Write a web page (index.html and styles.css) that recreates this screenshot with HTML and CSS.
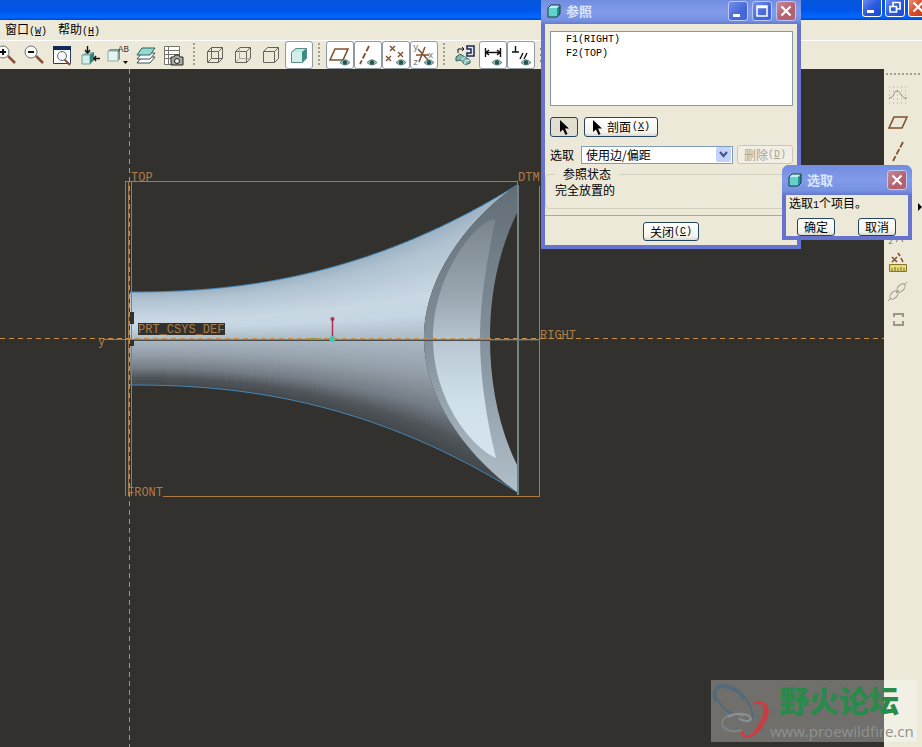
FILE: index.html
```
<!DOCTYPE html>
<html lang="zh-CN">
<head>
  <meta charset="UTF-8" />
  <meta name="viewport" content="width=device-width, initial-scale=1.0"/>
  <title>参照</title>
  <link rel="stylesheet" href="styles.css">
</head>
<body>
  <!-- shared icon parts -->
  <svg width="0" height="0" class="sprites" aria-hidden="true">
    <defs>
      <symbol id="eye" viewBox="0 0 10 7">
        <path d="M0 3.5Q5 -2 10 3.5Q5 8.5 0 3.5Z" fill="#a9c1ba" stroke="#4a726b" stroke-width=".8"/>
        <circle cx="5" cy="3.5" r="2.2" fill="#1f5552"/>
      </symbol>
      <symbol id="cube" viewBox="0 0 16 16">
        <path d="M2 5L5 2H14V11L11 14H2Z" fill="#2b8e8e"/>
        <path d="M2 5L5 2H14L11 5Z" fill="#c4f2ee"/>
        <path d="M2 5H11V14H2Z" fill="#62d3cb"/>
        <path d="M2 5L5 2H14V11L11 14H2Z" fill="none" stroke="#17383d"/>
      </symbol>
      <symbol id="wire" viewBox="0 0 18 18">
        <path d="M1.500 5.500H12.500V16.500H1.500ZM5.500 1.500H16.500V12.500M1.500 5.500L5.500 1.500M12.500 5.500L16.500 1.500M12.500 16.500L16.500 12.500" fill="none" stroke="#65645c"/>
      </symbol>
      <symbol id="plane" viewBox="0 0 20 14">
        <path d="M6 1H19L14 12H1Z" fill="none" stroke="#81502f" stroke-width="1.600"/>
      </symbol>
      <symbol id="arrow" viewBox="0 0 10 15">
        <path d="M1 0V12L4 9.500L6.500 15L8.500 14L6 8.500H10Z"/>
      </symbol>
      <symbol id="close" viewBox="0 0 12 12">
        <path d="M1.500 1.500L10.500 10.500M10.500 1.500L1.500 10.500" stroke="#fff" stroke-width="2.200"/>
      </symbol>
    </defs>
  </svg>

  <div class="app">
    <header class="titlebar">
      <button class="win-btn" aria-label="最小化"><svg width="12" height="12"><path d="M1 9H8V12H1Z" fill="#fff"/></svg></button>
      <button class="win-btn" aria-label="还原"><svg width="12" height="12"><path d="M4 5V1.500H11V8H8M1 5.500H7.500V11H1Z" fill="none" stroke="#fff" stroke-width="1.700"/></svg></button>
      <button class="win-btn red" aria-label="关闭"><svg width="12" height="12"><use href="#close"/></svg></button>
    </header>

    <nav class="menubar">
      <a href="#">窗口<span class="key">(<u>W</u>)</span></a>
      <a href="#">帮助<span class="key">(<u>H</u>)</span></a>
    </nav>

    <div class="toolbar">
      <button class="tool" aria-label="放大"><svg width="24" height="24"><path d="M14 13L21 20" stroke="#8a5236" stroke-width="2.500"/><circle cx="9" cy="9" r="6" fill="#f7f8f4" stroke="#6b7480"/><path d="M6 9H12M9 6V12" stroke="#111" stroke-width="2"/></svg></button>
      <button class="tool" aria-label="缩小"><svg width="24" height="24"><path d="M14 13L21 20" stroke="#8a5236" stroke-width="2.500"/><circle cx="9" cy="9" r="6" fill="#f7f8f4" stroke="#6b7480"/><path d="M6 9H12" stroke="#111" stroke-width="2"/></svg></button>
      <button class="tool" aria-label="重新调整"><svg width="24" height="24"><path d="M3.500 3.500H20.500V20.500H3.500Z" fill="#fff" stroke="#243c6d"/><path d="M3 3H21V7H3Z" fill="#10295d"/><path d="M14 16L20 22" stroke="#8a5236" stroke-width="2"/><circle cx="12" cy="13" r="4.500" fill="#f4f6f6" stroke="#5a646d"/></svg></button>
      <button class="tool" aria-label="重定向"><svg width="24" height="24"><path d="M4 12L8 9H16V17L13 20H4Z" fill="#87bdb3"/><path d="M4 12H12V21H4Z" fill="#d3efea" stroke="#759e97"/><path d="M12 12L16 9V17L12 21Z" fill="#33857b"/><path d="M9.500 3V10M7 7L9.500 10L12 7M22 15.500H16M18 13L16 15.500L18 18" fill="none" stroke="#111" stroke-width="1.400"/></svg></button>
      <button class="tool" aria-label="已保存视图"><svg width="24" height="24"><path d="M2 8L4 6H14V16L12 18H2Z" fill="#6c9993"/><path d="M2 8H12V18H2Z" fill="#e7f3ef" stroke="#8eafa9"/><path d="M17 18H22L19.500 21Z" fill="#111"/><text class="icon-text" x="12" y="9">AB</text></svg></button>
      <button class="tool" aria-label="层"><svg width="24" height="24"><path d="M3 20L8 14H21L16 20Z" fill="#fff" stroke="#41514f"/><path d="M3 16L8 10H21L16 16Z" fill="#fff" stroke="#41514f"/><path d="M3 12L8 5H21L16 12Z" fill="#8edcd3" stroke="#35605c"/></svg></button>
      <button class="tool" aria-label="视图管理器"><svg width="24" height="24"><path d="M2.500 3.500H17.500V21.500H2.500ZM6.500 3V21M2 7.500H17M2 11.500H17M2 15.500H17" fill="#fff" stroke="#74746d"/><path d="M9 14H12L13 12H17L18 14H21V22H9Z" fill="#a7a89f" stroke="#292925"/><circle cx="15" cy="18" r="2.500" fill="#eee" stroke="#222"/></svg></button>
      <span class="sep"></span>
      <button class="tool" aria-label="线框"><svg width="18" height="18"><use href="#wire"/><path d="M5.500 1.500V12.500H16.500M1.500 16.500L5.500 12.500" fill="none" stroke="#65645c"/></svg></button>
      <button class="tool" aria-label="隐藏线"><svg width="18" height="18"><use href="#wire"/><path d="M5.500 1.500V12.500H16.500M1.500 16.500L5.500 12.500" fill="none" stroke="#aaa89a"/></svg></button>
      <button class="tool" aria-label="无隐藏线"><svg width="18" height="18"><use href="#wire"/></svg></button>
      <button class="tool on" aria-label="着色"><svg width="18" height="18"><path d="M1 6L6 2H17V12L12 17H1Z" fill="#378b84"/><path d="M1 6L6 2H17L12 6Z" fill="#bbebe5"/><path d="M1 6H12V17H1Z" fill="#d4eeea"/><path d="M1.500 6.500L6 2.500H16.500V12L12 16.500H1.500Z" fill="none" stroke="#5b8c88"/></svg></button>
      <span class="sep"></span>
      <button class="tool on" aria-label="平面显示"><svg width="24" height="24"><use href="#plane" x="1" y="5" width="20" height="14"/><use href="#eye" x="12" y="16" width="10" height="7"/></svg></button>
      <button class="tool on" aria-label="轴显示"><svg width="24" height="24"><path d="M13 3L4 21" stroke="#81502f" stroke-width="1.800" stroke-dasharray="6 2"/><use href="#eye" x="11" y="16" width="10" height="7"/></svg></button>
      <button class="tool on" aria-label="点显示"><svg width="24" height="24"><path d="M6 3L11 8M11 3L6 8M14 9L19 14M19 9L14 14M2 13L7 18M7 13L2 18" stroke="#81502f" stroke-width="1.400"/><use href="#eye" x="12" y="16" width="10" height="7"/></svg></button>
      <button class="tool on" aria-label="坐标系显示"><svg width="24" height="24"><path d="M13 4L7 19M6 6L16 17M4 12H17" fill="none" stroke="#81502f" stroke-width="1.500"/><g class="icon-text faint"><text x="1" y="7">y</text><text x="16" y="15">x</text><text x="1" y="22">z</text></g><use href="#eye" x="12" y="16" width="10" height="7"/></svg></button>
      <span class="sep"></span>
      <button class="tool" aria-label="草绘方向"><svg width="24" height="24"><path d="M3 14L7 11L12 14L17 17V20L12 22L8 17L3 18Z" fill="#79b9af" stroke="#3b615d"/><path d="M8 17L12 14M12 22V18L17 17" fill="none" stroke="#e1f2ef"/><path d="M14 3H21V13H14V10H18V6H14Z" fill="none" stroke="#17245e" stroke-width="1.500"/><path d="M5 10V6H11M9 4L11 6L9 8" fill="none" stroke="#111"/></svg></button>
      <button class="tool on" aria-label="尺寸显示"><svg width="24" height="24"><path d="M4.500 5V14M19.500 5V14M5 9.500H19M8 7L5 9.500L8 12M16 7L19 9.500L16 12" fill="none" stroke="#111" stroke-width="1.400"/><use href="#eye" x="11" y="16" width="10" height="7"/></svg></button>
      <button class="tool on" aria-label="约束显示"><svg width="24" height="24"><path d="M3 9H10M6.500 3V9M14 10L11 16M18 10L15 16" stroke="#111" stroke-width="1.400"/><use href="#eye" x="12" y="16" width="10" height="7"/></svg></button>
      <button class="tool" aria-label="栅格显示"><svg width="24" height="24"><path d="M3 6H21M3 12H21M3 18H21" stroke="#222" stroke-dasharray="2 2"/></svg></button>
    </div>

    <main class="work">
      <svg class="viewport" role="img" aria-label="模型">
        <defs>
          <linearGradient id="horn" x1="0" y1="0" x2="0" y2="1">
            <stop offset="0" stop-color="#9cb2c3"/>
            <stop offset=".08" stop-color="#b0c2d0"/>
            <stop offset=".3" stop-color="#c9d8e3"/>
            <stop offset=".38" stop-color="#c6d6e2"/>
            <stop offset=".52" stop-color="#a9b7c2"/>
            <stop offset=".68" stop-color="#929da7"/>
            <stop offset=".82" stop-color="#747c84"/>
            <stop offset=".92" stop-color="#50555a"/>
            <stop offset="1" stop-color="#43484c"/>
          </linearGradient>
          <linearGradient id="rim" x1="0" y1="0" x2="0" y2="1">
            <stop offset="0" stop-color="#626d76"/>
            <stop offset=".5" stop-color="#82909b"/>
            <stop offset="1" stop-color="#b1bfca"/>
          </linearGradient>
          <linearGradient id="bore" x1="0" y1="0" x2="0" y2="1">
            <stop offset="0" stop-color="#7a848c"/>
            <stop offset=".3" stop-color="#97a4ae"/>
            <stop offset=".55" stop-color="#bccbd6"/>
            <stop offset=".75" stop-color="#cfdfe9"/>
            <stop offset="1" stop-color="#d6e4ee"/>
          </linearGradient>
          <clipPath id="hornClip">
            <path d="M0 -200H387V-153C350 -128 294 -70 294 0C294 70 350 128 387 154V200H0Z"/>
          </clipPath>
        </defs>

        <!-- everything is measured from the part origin -->
        <g transform="translate(130 269)">
          <g id="slices" clip-path="url(#hornClip)" fill="url(#horn)" shape-rendering="crispEdges"></g>
          <path id="outline" class="edge"/>
          <path fill="url(#rim)" d="M387 -153C350 -128 294 -70 294 0C294 70 350 128 387 154V127C369 90 360 46 360 0C360 -46 369 -88 387 -125Z"/>
          <path fill="url(#bore)" d="M365 -118C352 -123 303 -68 303 0C303 58 338 107 366 120C357 84 350 40 350 0C350 -38 357 -76 365 -118Z"/>

          <g class="datum">
            <path d="M-4.500 158V-156.500H387.500V-152M-1.500 158V-156M1.500 158V-156M409.500 -152V158.500H33"/>
            <path d="M-26 1.500H409"/>
          </g>
          <path d="M2 2.500H409" stroke="#4a4c4d"/>
          <path d="M388 -153V157" stroke="#6f8688" stroke-width="2"/>
          <path d="M-1 -26H4V-14H-1ZM-1 2H4V8H-1ZM8 -15H95V-3H8Z" fill="#33312d"/>
          <path d="M202.500 -19V0" stroke="#b82b50" stroke-width="1.500"/>
          <circle cx="202.500" cy="-19" r="2" fill="#b82b50"/>
          <path d="M178 1H191" stroke="#68a855" stroke-width="2"/>
          <circle cx="202.500" cy="1" r="3" fill="#47c5b7"/>

          <g class="label">
            <text x="1" y="-157">TOP</text>
            <text x="388" y="-157">DTM</text>
            <text x="410" y="1">RIGHT</text>
            <text x="-3" y="158">FRONT</text>
            <text x="8" y="-5">PRT_CSYS_DEF</text>
            <text x="-32" y="7">y</text>
          </g>
        </g>
        <line class="axis" x1="0" y1="269.500" x2="100%" y2="269.500"/>
        <line class="axis" x1="129.500" y1="0" x2="129.500" y2="100%"/>
      </svg>

      <aside class="sidebar">
        <button class="tool" aria-label="草绘"><svg width="22" height="22"><path d="M2 3H20M2 7H20M2 11H20M2 15H20M2 19H20" stroke="#aaa89e" stroke-dasharray="1 3"/><path d="M2 14C8 14 6 7 10 7S14 15 20 14" fill="none" stroke="#8b8a82"/></svg></button>
        <button class="tool" aria-label="基准平面"><svg width="20" height="14"><use href="#plane"/></svg></button>
        <button class="tool" aria-label="基准轴"><svg width="22" height="22"><path d="M16 2L6 21" stroke="#81502f" stroke-width="1.800" stroke-dasharray="6 2"/></svg></button>
        <button class="tool" aria-label="曲线"><svg width="22" height="22"><path d="M3 18C6 0 16 22 19 4" fill="none" stroke="#81502f"/></svg></button>
        <button class="tool" aria-label="基准点"><svg width="22" height="22"><path d="M8 8L14 14M14 8L8 14" stroke="#81502f"/></svg></button>
        <button class="tool" aria-label="坐标系"><svg width="22" height="22"><path d="M9 18L13 13L16 18" fill="none" stroke="#777067"/><text class="icon-text faint" x="1" y="20">z</text></svg></button>
        <button class="tool" aria-label="分析"><svg width="22" height="22"><path d="M5 5L10 10M10 5L5 10M11 1L13 4M14 6L16 10" stroke="#81502f" stroke-width="1.600"/><path d="M2.500 12.500H19.500V19.500H2.500Z" fill="#eadc71" stroke="#85752e"/><path d="M5 19V16M8 19V15M11 19V16M14 19V15M17 19V16" stroke="#6c6331"/></svg></button>
        <button class="tool" aria-label="参照"><svg width="22" height="22" fill="none" stroke="#9b998d"><ellipse cx="7" cy="15" rx="5" ry="3" transform="rotate(-45 7 15)"/><ellipse cx="14" cy="8" rx="5" ry="3" transform="rotate(-45 14 8)"/><path d="M1 21L4 18M9 13L12 10M17 5L20 2"/></svg></button>
        <button class="tool" aria-label="替换"><svg width="22" height="22"><path d="M7 9V6H16V9M7 13V17H16V13" fill="none" stroke="#99978b" stroke-width="2"/></svg></button>
      </aside>
    </main>
  </div>

  <section class="dialog refs" aria-label="参照">
    <header class="dialog-title">
      <svg width="16" height="16"><use href="#cube"/></svg>
      <h2>参照</h2>
      <button class="win-btn" aria-label="最小化"><svg width="12" height="12"><path d="M1 9H8V12H1Z" fill="#fff"/></svg></button>
      <button class="win-btn" aria-label="最大化"><svg width="12" height="12"><path d="M1 1H11V11H1ZM1 2.500H11" fill="none" stroke="#fff" stroke-width="1.500"/></svg></button>
      <button class="win-btn red" aria-label="关闭"><svg width="12" height="12"><use href="#close"/></svg></button>
    </header>
    <div class="dialog-body">
      <ul class="ref-list">
        <li>F1(RIGHT)</li>
        <li>F2(TOP)</li>
      </ul>
      <div class="row picks">
        <button class="btn pick pressed" aria-label="选取参照"><svg width="10" height="15"><use href="#arrow"/></svg></button>
        <button class="btn section"><svg width="10" height="15"><use href="#arrow"/></svg>剖面<span class="key">(<u>X</u>)</span></button>
      </div>
      <div class="row">
        <label for="pickType">选取</label>
        <div class="combo">
          <select id="pickType"><option>使用边/偏距</option></select>
          <svg width="15" height="15"><path d="M4 5L7.500 9L11 5" fill="none" stroke="#43598c" stroke-width="2.200"/></svg>
        </div>
        <button class="btn delete" disabled>删除<span class="key">(<u>D</u>)</span></button>
      </div>
      <fieldset>
        <legend>参照状态</legend>
        <p>完全放置的</p>
      </fieldset>
      <footer>
        <button class="btn">关闭<span class="key">(<u>C</u>)</span></button>
      </footer>
    </div>
  </section>

  <section class="dialog select" aria-label="选取">
    <header class="dialog-title">
      <svg width="16" height="16"><use href="#cube"/></svg>
      <h2>选取</h2>
      <button class="win-btn red" aria-label="关闭"><svg width="12" height="12"><use href="#close"/></svg></button>
    </header>
    <div class="dialog-body">
      <p>选取<span class="key">1</span>个项目。</p>
      <div class="answers">
        <button class="btn">确定</button>
        <button class="btn">取消</button>
      </div>
    </div>
  </section>

  <span class="flyout"></span>

  <div class="watermark">
    <svg width="58" height="58" fill="none">
      <path d="M26 34C8 28 -3 9 6 4C18 -2 44 20 40 37" stroke="#536a7b" stroke-width="2"/>
      <path d="M4 20C0 8 5 3 13 4C21 5 28 10 33 17" stroke="#536a7b" stroke-width="4"/>
      <path d="M42 21C58 18 58 32 50 43C42 56 31 58 29 49" stroke="#c83e42" stroke-width="3"/>
      <path d="M52 24C56 30 50 43 43 50" stroke="#c83e42" stroke-width="4"/>
      <path d="M30 48C17 52 7 45 11 38C15 32 24 31 32 34" stroke="#7b868b" stroke-width="2"/>
      <path d="M16 35C25 29 38 32 39 37C38 40 31 40 27 36" stroke="#8c9396" stroke-width="2"/>
    </svg>
    <div class="mark-text">
      <strong>野火论坛</strong>
      <span>www.proewildfire.cn</span>
    </div>
  </div>

  <script>
    const LENGTH = 387;
    const slices = document.getElementById("slices");

    // half height of the horn at distance x from the mouthpiece
    function radius(x) {
      return 46 + 107 * Math.pow(x / LENGTH, 2.25);
    }

    let upper = "";
    let lower = "";
    for (let x = 0; x <= LENGTH; x++) {
      const r = Math.round(radius(x));
      const slice = document.createElementNS("http://www.w3.org/2000/svg", "rect");
      slice.setAttribute("x", x);
      slice.setAttribute("y", -r);
      slice.setAttribute("width", 1);
      slice.setAttribute("height", r * 2 + 1);
      slices.appendChild(slice);
      upper += (x ? "L" : "M") + x + " " + -radius(x);
      lower += (x ? "L" : "M") + x + " " + (radius(x) + 1);
    }
    document.getElementById("outline").setAttribute("d", upper + lower);
  </script>
</body>
</html>
```
FILE: styles.css
```
* {
  box-sizing: border-box;
}

body {
  margin: 0;
  min-height: 100vh;
  position: relative;
  overflow: hidden;
  background: #ece9d8;
  color: #000;
  font-family: "Noto Sans CJK SC", sans-serif;
  font-size: 12px;
  line-height: 16px;
}

button, select {
  font: inherit;
  color: inherit;
  padding: 0;
}

.sprites {
  position: absolute;
}

svg {
  flex: none;
}

.key {
  font-family: "Liberation Mono", monospace;
  font-size: 10px;
}

.icon-text {
  fill: #373733;
  font-family: "Liberation Mono", monospace;
  font-size: 9px;
}

.icon-text.faint {
  fill: #6d6d69;
}

.app {
  display: flex;
  flex-direction: column;
  height: 100vh;
}

/* main window */
.titlebar {
  display: flex;
  justify-content: flex-end;
  align-items: flex-end;
  gap: 3px;
  height: 20px;
  padding-bottom: 3px;
  margin-right: -6px;
  background: linear-gradient(#0855dd, #0055e8 50%, #0068ff 85%, #0046cc);
}

.win-btn {
  display: flex;
  align-items: center;
  justify-content: center;
  flex: none;
  width: 20px;
  height: 20px;
  border: 1px solid #fff;
  border-radius: 3px;
  background: linear-gradient(135deg, #6f91f5, #2d5bdf 50%, #1c4bd0);
}

.win-btn.red {
  background: linear-gradient(135deg, #ee9378, #d94d2b 50%, #bf3918);
}

.menubar {
  display: flex;
  gap: 11px;
  flex: none;
  height: 21px;
  padding: 1px 5px;
  border-bottom: 1px solid #fff;
}

.menubar a {
  color: #000;
  text-decoration: none;
}

.toolbar {
  display: flex;
  flex: none;
  height: 28px;
  margin-left: -8px;
}

.tool {
  display: flex;
  align-items: center;
  justify-content: center;
  flex: none;
  width: 28px;
  height: 28px;
  border: 1px solid transparent;
  border-radius: 3px;
  background: none;
}

.tool.on {
  background: #fff;
  border-color: #8e9ba4;
}

.sep {
  flex: none;
  width: 13px;
  height: 24px;
  margin-top: 2px;
  background: repeating-linear-gradient(#a19f94 0 2px, transparent 2px 4px) 5px 0 / 2px 100% no-repeat;
}

.work {
  display: flex;
  flex: 1;
  min-height: 0;
}

.viewport {
  flex: 1;
  min-width: 0;
  height: 100%;
  background: #33312d;
}

.edge {
  fill: none;
  stroke: #4387b8;
}

.datum {
  fill: none;
  stroke: #a97a42;
  shape-rendering: crispEdges;
}

.axis {
  stroke: #c78f42;
  stroke-dasharray: 5 4;
  shape-rendering: crispEdges;
}

.label {
  fill: #ad7d48;
  font-family: "Liberation Mono", monospace;
  font-size: 12px;
}

.sidebar {
  flex: none;
  width: 38px;
  padding-top: 12px;
  background: repeating-linear-gradient(90deg, #a19f94 0 2px, transparent 2px 4px) 2px 4px / 100% 2px no-repeat;
}

/* floating windows */
.dialog {
  position: absolute;
  display: flex;
  flex-direction: column;
  border: 4px solid #6674cf;
  border-top: 0;
}

.dialog-title {
  display: flex;
  align-items: center;
  gap: 4px;
  margin: 0 -4px;
  padding: 0 5px;
  background: linear-gradient(#728ce0, #829ce9 50%, #7791e2 85%, #6579d2);
}

.dialog-title h2 {
  flex: 1;
  margin: 0;
  color: #dce6fa;
  font-size: 13px;
  font-weight: 700;
}

.dialog-title .win-btn {
  border-color: #b9c8f4;
  background: linear-gradient(135deg, #7590e8, #4468d8 60%);
}

.dialog-title .win-btn.red {
  background: linear-gradient(135deg, #cc8793, #b3606f 60%);
}

.dialog-body {
  flex: 1;
  background: #ece9d8;
}

.dialog p {
  margin: 0;
}

.btn {
  display: flex;
  align-items: center;
  justify-content: center;
  height: 19px;
  border: 1px solid #234562;
  border-radius: 3px;
  background: linear-gradient(#fff, #f3f2eb 80%, #dcd8cb);
}

.btn:disabled {
  color: #a5a394;
  border-color: #c9c7ba;
  background: #f1efe5;
}

.refs {
  top: 0;
  left: 541px;
  width: 260px;
}

.refs .dialog-title {
  height: 24px;
  padding-bottom: 3px;
}

.refs .dialog-body {
  padding: 7px 4px 4px 5px;
}

.ref-list {
  height: 75px;
  margin: 0 0 11px;
  padding: 1px 15px;
  border: 1px solid #8497a5;
  background: #fff;
  list-style: none;
  font-family: "Liberation Mono", monospace;
  font-size: 10px;
  line-height: 14px;
}

.row {
  display: flex;
  align-items: center;
  gap: 4px;
}

.picks {
  gap: 6px;
  margin-bottom: 8px;
}

.picks .btn {
  height: 20px;
}

.pick {
  width: 28px;
}

.pressed {
  background: #e2dfd0;
}

.section {
  gap: 5px;
  width: 74px;
}

.section .key {
  margin-left: -4px;
}

.row label {
  flex: none;
  width: 27px;
}

.combo {
  display: flex;
  align-items: center;
  flex: 1;
  height: 18px;
  padding-right: 1px;
  border: 1px solid #7f9db9;
  background: #fff;
}

.combo select {
  flex: 1;
  height: 16px;
  padding-left: 4px;
  border: 0;
  background: none;
  appearance: none;
}

.combo svg {
  background: #c3d3fc;
  border-radius: 2px;
  pointer-events: none;
}

.delete {
  width: 56px;
}

.refs fieldset {
  height: 43px;
  margin: 2px -4px 6px -5px;
  padding: 0 9px;
  border: 1px solid #d2d0bf;
  border-radius: 4px;
}

.refs legend {
  padding: 0 8px;
}

.refs footer {
  display: flex;
  justify-content: center;
  margin: 0 -4px 0 -5px;
  padding-top: 6px;
  border-top: 1px solid #aaa899;
}

.refs footer .btn {
  width: 56px;
}

.select {
  top: 165px;
  left: 782px;
  width: 130px;
  border-radius: 7px 7px 0 0;
}

.select .dialog-title {
  height: 30px;
  border-radius: 7px 7px 0 0;
}

.select .dialog-body {
  height: 41px;
  padding: 0 3px;
}

.answers {
  display: flex;
  justify-content: space-between;
  padding: 4px 9px 0 8px;
}

.answers .btn {
  width: 38px;
  height: 18px;
}

.flyout {
  position: absolute;
  top: 203px;
  right: 0;
  border: 4px solid transparent;
  border-left-color: #000;
  border-right: 0;
}

.watermark {
  position: absolute;
  right: 5px;
  bottom: 5px;
  display: flex;
  width: 206px;
  height: 62px;
  padding: 2px 0 2px 1px;
  background: rgba(255, 255, 255, 0.3);
}

.mark-text {
  display: flex;
  flex-direction: column;
  margin-top: -5px;
  white-space: nowrap;
}

.mark-text strong {
  padding-left: 9px;
  color: #2a8a4b;
  font-size: 30px;
  font-weight: 900;
  line-height: 44px;
}

.mark-text span {
  color: #8f9290;
  font-family: "Open Sans", sans-serif;
  font-size: 15px;
  line-height: 20px;
}
```
